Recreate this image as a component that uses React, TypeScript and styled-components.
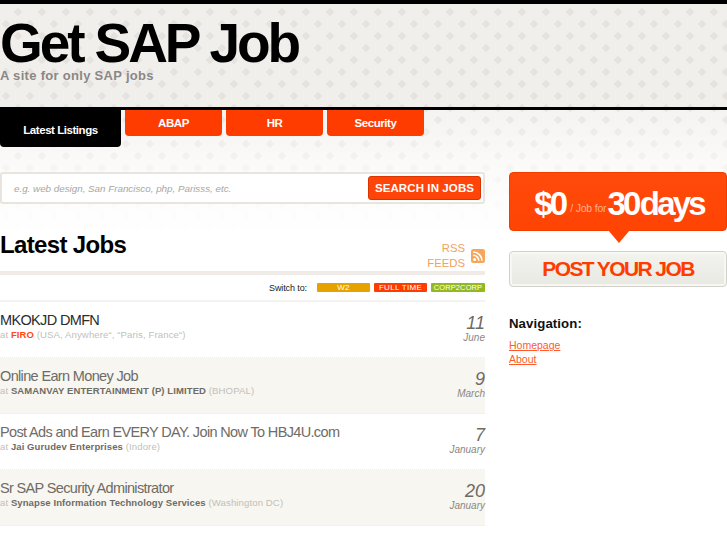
import React from "react";
import styled, { createGlobalStyle } from "styled-components";

const diamonds = (tile: string, spot: string) => {
  const svg = `<svg xmlns='http://www.w3.org/2000/svg' width='24' height='24'><rect width='24' height='24' fill='${tile}'/><path d='M6 2l4 4-4 4-4-4zM18 14l4 4-4 4-4-4z' fill='${spot}' stroke='${spot}' stroke-width='0.6' stroke-linejoin='round'/></svg>`;
  return `url("data:image/svg+xml,${encodeURIComponent(svg)}")`;
};

const Global = createGlobalStyle`
  html, body { margin: 0; padding: 0; background: #fff; }
  body { font-family: "Liberation Sans", Arial, sans-serif; overflow: hidden; }
  a { color: inherit; }
`;

const Page = styled.div`
  width: 727px;
  height: 545px;
  overflow: hidden;
  background: #fff;
`;

const Masthead = styled.header`
  box-sizing: border-box;
  height: 110px;
  padding-top: 15px;
  border-top: 4px solid #000;
  border-bottom: 3px solid #000;
  background: ${diamonds("#f1efeb", "#e6e2df")} 0 -10px;
`;

const Logo = styled.h1`
  margin: 0;
  height: 49px;
  font-size: 55px;
  line-height: 49px;
  font-weight: 700;
  letter-spacing: -3.1px;
  color: #000;
`;

const Tagline = styled.p`
  margin: 0;
  font-size: 13px;
  line-height: 15px;
  font-weight: 700;
  letter-spacing: 0.3px;
  color: #8a8785;
`;

const Backdrop = styled.div`
  height: 435px;
  background:
    linear-gradient(180deg, rgba(255, 255, 255, 0.1) 0, rgba(255, 255, 255, 0.7) 62px, #fff 125px),
    ${diamonds("#f4f2ef", "#e6e2df")} 0 4px;
`;

const Tabs = styled.nav`
  display: flex;
  align-items: flex-start;
  gap: 4px;
  height: 62px;
`;

const Tab = styled.a<{ $active?: boolean }>`
  display: flex;
  align-items: center;
  justify-content: center;
  box-sizing: border-box;
  width: ${(p) => (p.$active ? "121px" : "97px")};
  height: ${(p) => (p.$active ? "37px" : "26px")};
  padding-top: ${(p) => (p.$active ? "3px" : "0")};
  border-radius: 0 0 4px 4px;
  background: ${(p) => (p.$active ? "#000" : "#ff3c00")};
  color: #fff;
  font-size: 11.5px;
  font-weight: 700;
  letter-spacing: -0.45px;
`;

const Columns = styled.div`
  display: flex;
  gap: 24px;
`;

const Main = styled.main`
  width: 485px;
`;

const SearchBox = styled.form`
  box-sizing: border-box;
  display: flex;
  align-items: center;
  justify-content: space-between;
  height: 32px;
  padding: 0 2px 0 12px;
  border: 2px solid #e9e4dd;
  border-radius: 3px;
  background: #fff;
`;

const SearchHint = styled.span`
  font-size: 9.8px;
  font-style: italic;
  color: #a9a6a1;
`;

const SearchButton = styled.span`
  box-sizing: border-box;
  width: 113px;
  height: 24px;
  border: 1px solid #d93400;
  border-radius: 3px;
  background: #ff4409;
  color: #fff;
  font-size: 11.5px;
  line-height: 22px;
  font-weight: 700;
  text-align: center;
  letter-spacing: 0.1px;
  white-space: nowrap;
`;

const ListHead = styled.div`
  box-sizing: border-box;
  display: flex;
  justify-content: space-between;
  height: 71px;
  padding-top: 27px;
  border-bottom: 4px solid #f0ebe6;
`;

const ListTitle = styled.h2`
  margin: 0;
  font-size: 24px;
  line-height: 28px;
  font-weight: 700;
  letter-spacing: -0.65px;
  color: #000;
`;

const Feed = styled.a`
  display: flex;
  align-items: center;
  gap: 6px;
  margin-top: 10px;
  height: 30px;
  font-size: 11.3px;
  line-height: 15px;
  text-align: right;
  color: #f2a15f;
`;

const Switcher = styled.div`
  box-sizing: border-box;
  display: flex;
  align-items: center;
  justify-content: flex-end;
  height: 27px;
  border-bottom: 2px solid #f4f3f1;
  font-size: 9px;
  letter-spacing: -0.1px;
  color: #222;
`;

const SwitchLabel = styled.span`
  margin-right: 10px;
`;

const Chip = styled.span<{ $bg: string; $w: number; $ml: number; $tight?: boolean }>`
  box-sizing: border-box;
  width: ${(p) => p.$w}px;
  height: 9px;
  margin-left: ${(p) => p.$ml}px;
  border-radius: 1px;
  background: ${(p) => p.$bg};
  color: #fff;
  font-size: ${(p) => (p.$tight ? "7.5px" : "8px")};
  line-height: 9px;
  letter-spacing: ${(p) => (p.$tight ? "0.1px" : "0.3px")};
  text-align: center;
  white-space: nowrap;
`;

const Row = styled.article<{ $alt?: boolean }>`
  box-sizing: border-box;
  display: flex;
  justify-content: space-between;
  height: 56px;
  padding-top: 10px;
  background: ${(p) => (p.$alt ? "#f7f6f0" : "#fff")};
  border-bottom: 1px dotted #efece6;
`;

const JobTitle = styled.div<{ $dark?: boolean }>`
  font-size: 14.5px;
  line-height: 17px;
  letter-spacing: -0.65px;
  color: ${(p) => (p.$dark ? "#2c2c2c" : "#6f6b65")};
`;

const JobMeta = styled.div`
  font-size: 9.5px;
  line-height: 12px;
  letter-spacing: 0.1px;
  color: #c2bfb9;
`;

const Company = styled.b<{ $hot?: boolean }>`
  font-size: 9.5px;
  color: ${(p) => (p.$hot ? "#ff4a12" : "#6f6b65")};
  letter-spacing: 0.1px;
`;

const Place = styled.span`
  font-size: 9.6px;
`;

const DateBox = styled.div`
  padding-top: 3px;
  text-align: right;
  font-style: italic;
  color: #6f6b65;
`;

const Day = styled.div`
  font-size: 18px;
  line-height: 17px;
`;

const Month = styled.div`
  font-size: 10px;
  line-height: 11px;
  color: #8b8782;
`;

const Side = styled.aside`
  width: 218px;
`;

const Promo = styled.div`
  position: relative;
  box-sizing: border-box;
  display: flex;
  align-items: center;
  justify-content: center;
  height: 59px;
  padding: 5px 0 0 2px;
  border: 1px solid #ee3f00;
  border-radius: 4px;
  background: linear-gradient(180deg, #ff4a0b, #ff4404);
  color: #fff;
  font-weight: 700;
  &::after {
    content: "";
    position: absolute;
    left: 98px;
    bottom: -13px;
    border-style: solid;
    border-width: 13px 11px 0;
    border-color: #ff4404 transparent transparent;
  }
`;

const PromoBig = styled.span`
  font-size: 33px;
  letter-spacing: -2.8px;
  word-spacing: -5px;
`;

const PromoSmall = styled.span`
  margin: 8px 1px 0 5px;
  font-size: 10.5px;
  font-weight: 400;
  letter-spacing: -0.2px;
  color: #ffb08c;
`;

const PostButton = styled.a`
  box-sizing: border-box;
  display: block;
  height: 36px;
  margin-top: 20px;
  border: 1px solid #d3d2ca;
  border-radius: 4px;
  background: linear-gradient(180deg, #f3f3ef, #e9e9e3);
  box-shadow: inset 0 0 0 2px #f7f7f4;
  color: #ff3c00;
  font-size: 21px;
  line-height: 33px;
  font-weight: 700;
  letter-spacing: -1.6px;
  text-align: center;
`;

const NavHeading = styled.h3`
  margin: 29px 0 0;
  font-size: 13.2px;
  line-height: 16px;
  font-weight: 700;
  letter-spacing: 0.1px;
  color: #111;
`;

const NavList = styled.ul`
  margin: 6px 0 0;
  padding: 0;
  list-style: none;
  font-size: 10.5px;
  line-height: 14px;
  color: #ff5a2a;
`;

const RssIcon = () => (
  <svg width="14" height="14" viewBox="0 0 14 14" aria-hidden="true">
    <rect width="14" height="14" rx="2.5" fill="#f5a65b" />
    <circle cx="3.6" cy="10.4" r="1.5" fill="#fff" />
    <path d="M2.2 6.2a5.6 5.6 0 0 1 5.6 5.6M2.2 3a8.8 8.8 0 0 1 8.8 8.8" fill="none" stroke="#fff" strokeWidth="1.6" />
  </svg>
);

const jobs = [
  { title: "MKOKJD DMFN", company: "FIRO", place: "(USA, Anywhere“, “Paris, France“)", day: "11", month: "June", hot: true },
  { title: "Online Earn Money Job", company: "SAMANVAY ENTERTAINMENT (P) LIMITED", place: "(BHOPAL)", day: "9", month: "March" },
  { title: "Post Ads and Earn EVERY DAY. Join Now To HBJ4U.com", company: "Jai Gurudev Enterprises", place: "(Indore)", day: "7", month: "January" },
  { title: "Sr SAP Security Administrator", company: "Synapse Information Technology Services", place: "(Washington DC)", day: "20", month: "January" },
];

export default function App() {
  return (
    <Page>
      <Global />
      <Masthead>
        <Logo>Get SAP Job</Logo>
        <Tagline>A site for only SAP jobs</Tagline>
      </Masthead>
      <Backdrop>
        <Tabs>
          <Tab $active>Latest Listings</Tab>
          <Tab>ABAP</Tab>
          <Tab>HR</Tab>
          <Tab>Security</Tab>
        </Tabs>
        <Columns>
          <Main>
            <SearchBox>
              <SearchHint>e.g. web design, San Francisco, php, Parisss, etc.</SearchHint>
              <SearchButton>SEARCH IN JOBS</SearchButton>
            </SearchBox>
            <ListHead>
              <ListTitle>Latest Jobs</ListTitle>
              <Feed>
                <span>RSS<br />FEEDS</span>
                <RssIcon />
              </Feed>
            </ListHead>
            <Switcher>
              <SwitchLabel>Switch to:</SwitchLabel>
              <Chip $bg="#e8a200" $w={53} $ml={0}>W2</Chip>
              <Chip $bg="#ff3c00" $w={53} $ml={4}>FULL TIME</Chip>
              <Chip $bg="#94b81e" $w={54} $ml={4} $tight>CORP2CORP</Chip>
            </Switcher>
            {jobs.map((job, i) => (
              <Row key={job.title} $alt={i % 2 === 1}>
                <div>
                  <JobTitle $dark={job.hot}>{job.title}</JobTitle>
                  <JobMeta>
                    at <Company $hot={job.hot}>{job.company}</Company> <Place>{job.place}</Place>
                  </JobMeta>
                </div>
                <DateBox>
                  <Day>{job.day}</Day>
                  <Month>{job.month}</Month>
                </DateBox>
              </Row>
            ))}
          </Main>
          <Side>
            <Promo>
              <PromoBig>$0</PromoBig>
              <PromoSmall>/ Job for</PromoSmall>
              <PromoBig>30 days</PromoBig>
            </Promo>
            <PostButton>POST YOUR JOB</PostButton>
            <NavHeading>Navigation:</NavHeading>
            <NavList>
              <li><a href="#home">Homepage</a></li>
              <li><a href="#about">About</a></li>
            </NavList>
          </Side>
        </Columns>
      </Backdrop>
    </Page>
  );
}
